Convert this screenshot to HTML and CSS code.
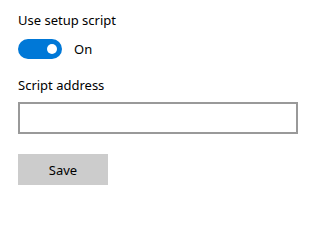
FILE: index.html
```html
<!DOCTYPE html>
<html>
<head>
<meta charset="utf-8">
<link rel="stylesheet" href="styles.css">
</head>
<body>
<div class="panel">
  <div class="label">Use setup script</div>
  <div class="toggle-row">
    <div class="toggle"><div class="knob"></div></div>
    <span class="toggle-text">On</span>
  </div>
  <div class="label label-address">Script address</div>
  <input class="textbox" type="text">
  <button class="save">Save</button>
</div>
</body>
</html>
```
FILE: styles.css
```css
html, body {
  margin: 0;
  padding: 0;
  background: #ffffff;
}
body {
  font-family: "Noto Sans", "Open Sans", sans-serif;
  font-size: 13px;
  color: #000000;
}
.panel {
  padding: 10px 18px 0 18px;
  display: flex;
  flex-direction: column;
  align-items: flex-start;
}
.label {
  height: 20px;
  line-height: 20px;
}
.toggle-row {
  margin-top: 9px;
  height: 20px;
  display: flex;
  align-items: center;
  gap: 12px;
}
.toggle {
  width: 44px;
  height: 20px;
  border-radius: 10px;
  background: #0078d7;
  display: flex;
  align-items: center;
  justify-content: flex-end;
  padding-right: 5px;
  box-sizing: border-box;
}
.knob {
  width: 10px;
  height: 10px;
  border-radius: 50%;
  background: #ffffff;
}
.toggle-text {
  line-height: 20px;
}
.label-address {
  margin-top: 16px;
}
.textbox {
  margin-top: 7px;
  width: 280px;
  height: 32px;
  box-sizing: border-box;
  border: 2px solid #999999;
  background: #ffffff;
  padding: 0 8px;
  font: inherit;
  outline: none;
}
.save {
  margin-top: 20px;
  width: 90px;
  height: 31px;
  border: none;
  background: #cccccc;
  font: inherit;
  color: #000000;
  padding: 0;
}
```
